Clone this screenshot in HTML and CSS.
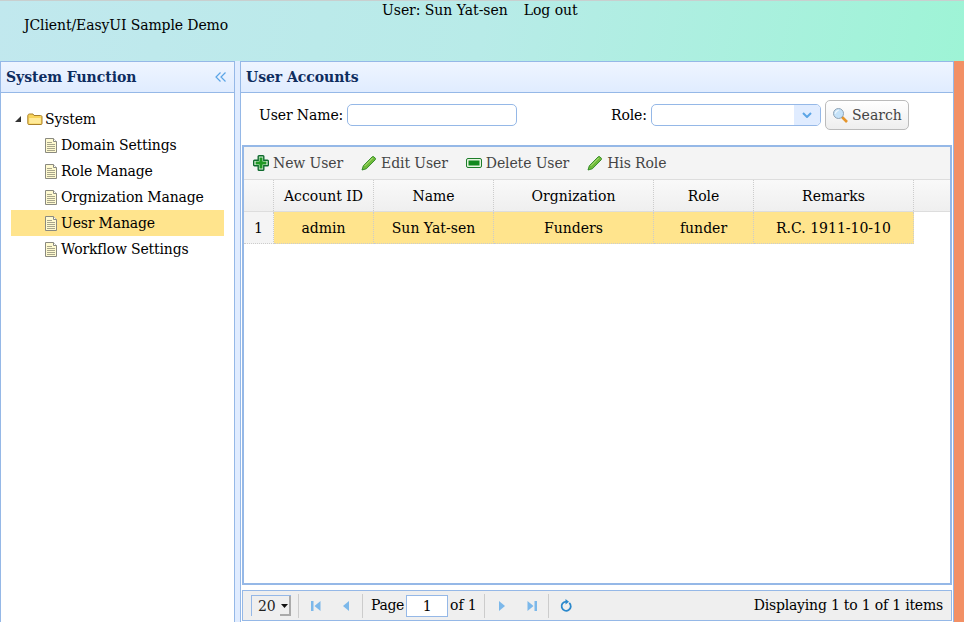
FILE: index.html
```html
<!DOCTYPE html>
<html lang="en">
<head>
<meta charset="utf-8">
<title>JClient/EasyUI Sample Demo</title>
<link rel="stylesheet" href="styles.css">
</head>
<body>
<svg class="defs" width="0" height="0">
  <defs>
    <symbol id="doc" viewBox="0 0 16 16">
      <path d="M1.500 1.500h8l3 3v11h-11z" fill="#fffad0" stroke="#8a8a80"/>
      <path d="M9.500 1.500v3h3" fill="#fff" stroke="#8a8a80"/>
      <path d="M3 5.500h5M3 7.500h8M3 9.500h8M3 11.500h8M3 13.500h8" stroke="#a8a68c" fill="none"/>
    </symbol>
    <symbol id="pencil" viewBox="0 0 16 16">
      <path d="M1 15l1.300-4.200 8.900-9c.5-.5 1.200-.5 1.700 0l1.300 1.300c.5 .5 .5 1.200 0 1.700l-8.900 9z" fill="#6fbb3a" stroke="#2a8420" stroke-width=".9"/>
      <path d="M3.800 10.800l7.800-7.800" stroke="#c4e88f" fill="none" stroke-width=".9"/>
    </symbol>
  </defs>
</svg>
<header class="top">
  <div class="brand">JClient/EasyUI Sample Demo</div>
  <div class="user"><span>User: Sun Yat-sen</span><span>Log out</span></div>
</header>
<div class="main">
  <aside class="side">
    <div class="phead">
      <span>System Function</span>
      <svg class="collapse" width="12" height="12" viewBox="0 0 12 12"><path d="M5.500 1.500L1 6l4.500 4.500M10.500 1.500L6 6l4.500 4.500" fill="none" stroke="#5ba5e6" stroke-width="1.200"/></svg>
    </div>
    <div class="tree">
      <div class="node root">
        <svg class="arrow" width="8" height="8" viewBox="0 0 8 8"><path d="M7 1v6H1z" fill="#333"/></svg>
        <svg class="ico" width="16" height="16" viewBox="0 0 16 16"><path d="M.8 5c0-1.200.7-2 1.700-2h3.500l1 1.500h6.500c.8 0 1.500 .5 1.500 1.200v6.800c0 .6-.4 1-1 1H1.800c-.6 0-1-.4-1-1z" fill="#f7d35a" stroke="#a9802c"/><path d="M2.200 7h11.600v5.500H2.200z" fill="#ffea9a"/></svg>
        <span>System</span>
      </div>
      <div class="node leaf"><svg class="ico" width="16" height="16"><use href="#doc"/></svg><span>Domain Settings</span></div>
      <div class="node leaf"><svg class="ico" width="16" height="16"><use href="#doc"/></svg><span>Role Manage</span></div>
      <div class="node leaf"><svg class="ico" width="16" height="16"><use href="#doc"/></svg><span>Orgnization Manage</span></div>
      <div class="node leaf on"><svg class="ico" width="16" height="16"><use href="#doc"/></svg><span>Uesr Manage</span></div>
      <div class="node leaf"><svg class="ico" width="16" height="16"><use href="#doc"/></svg><span>Workflow Settings</span></div>
    </div>
  </aside>
  <section class="content">
    <div class="phead"><span>User Accounts</span></div>
    <div class="cbody">
      <form class="filter">
        <label class="f1">User Name:</label>
        <div class="inp name"></div>
        <label class="f2">Role:</label>
        <div class="inp role"><div class="drop"><svg width="10" height="6" viewBox="0 0 10 6"><path d="M1 1l4 4 4-4" fill="none" stroke="#5ba5e6" stroke-width="2"/></svg></div></div>
        <div class="search">
          <svg width="16" height="16" viewBox="0 0 16 16"><path d="M9.500 9.500l5.500 5.500" stroke="#e5952c" stroke-width="2.600"/><circle cx="6.500" cy="6.500" r="5" fill="#c5e2f8" stroke="#8fa3b5"/><path d="M3.500 6.500a3 3 0 0 1 3-3" stroke="#fff" fill="none"/></svg>
          <span>Search</span>
        </div>
      </form>
      <div class="grid">
        <div class="tools">
          <div class="tool"><svg class="tico" width="16" height="16" viewBox="0 0 16 16"><path d="M6 .7h4c.5 0 .8 .3 .8 .8v3.700h3.700c.5 0 .8 .3 .8 .8v4c0 .5-.3 .8-.8 .8h-3.700v3.700c0 .5-.3 .8-.8 .8H6c-.5 0-.8-.3-.8-.8v-3.700H1.500c-.5 0-.8-.3-.8-.8V6c0-.5 .3-.8 .8-.8h3.700V1.500c0-.5 .3-.8 .8-.8z" fill="#dff2df" stroke="#0f6b2e" stroke-width="1.400"/><path d="M6.500 2.600h3v3.900h3.900v3H9.500v3.900h-3V9.500H2.600v-3h3.900z" fill="#1f9a24"/></svg><span>New User</span></div>
          <div class="tool"><svg class="tico" width="16" height="16"><use href="#pencil"/></svg><span>Edit User</span></div>
          <div class="tool"><svg class="tico" width="16" height="16" viewBox="0 0 16 16"><rect x=".5" y="3.500" width="15" height="9" rx="1.500" fill="#e6f5e0" stroke="#1d7d2a"/><rect x="2.500" y="5.500" width="11" height="5" fill="#128a1f"/></svg><span>Delete User</span></div>
          <div class="tool"><svg class="tico" width="16" height="16"><use href="#pencil"/></svg><span>His Role</span></div>
        </div>
        <div class="row head">
          <div class="c num"></div>
          <div class="c w100">Account ID</div>
          <div class="c w120">Name</div>
          <div class="c w160">Orgnization</div>
          <div class="c w100">Role</div>
          <div class="c w160">Remarks</div>
        </div>
        <div class="row data">
          <div class="c num">1</div>
          <div class="c w100">admin</div>
          <div class="c w120">Sun Yat-sen</div>
          <div class="c w160">Funders</div>
          <div class="c w100">funder</div>
          <div class="c w160">R.C. 1911-10-10</div>
        </div>
      </div>
      <div class="pager">
        <div class="size"><span>20</span><div class="spin"><svg width="7" height="4" viewBox="0 0 7 4"><path d="M0 0h7L3.500 4z" fill="#111"/></svg></div></div>
        <i class="sep"></i>
        <svg class="pb" width="16" height="16" viewBox="0 0 16 16"><path d="M3 3h2.500v10H3zM12.500 3v10L6.500 8z" fill="#7cb8ea"/></svg>
        <svg class="pb" width="16" height="16" viewBox="0 0 16 16"><path d="M11 3v10L5 8z" fill="#7cb8ea"/></svg>
        <i class="sep"></i>
        <span class="pt pg">Page</span>
        <div class="pnum">1</div>
        <span class="pt of">of 1</span>
        <i class="sep"></i>
        <svg class="pb" width="16" height="16" viewBox="0 0 16 16"><path d="M5 3v10l6-5z" fill="#7cb8ea"/></svg>
        <svg class="pb" width="16" height="16" viewBox="0 0 16 16"><path d="M3.500 3v10l6-5zM10.500 3H13v10h-2.500z" fill="#7cb8ea"/></svg>
        <i class="sep"></i>
        <svg class="pb" width="16" height="16" viewBox="0 0 16 16"><path d="M11.300 4.800A4.600 4.600 0 1 1 8 3.600" fill="none" stroke="#2a88cc" stroke-width="1.800"/><path d="M7.500 1v5.500L11 3.800z" fill="#2a88cc"/></svg>
        <span class="info">Displaying 1 to 1 of 1 items</span>
      </div>
    </div>
  </section>
  <div class="strip"></div>
</div>
</body>
</html>
```
FILE: styles.css
```css
* { box-sizing: border-box; }
html, body { height: 100%; }
body {
  margin: 0;
  width: 964px;
  height: 622px;
  overflow: hidden;
  display: flex;
  flex-direction: column;
  font: 14px/1.2 "DejaVu Serif", serif;
  letter-spacing: -0.11px;
  color: #000;
  background: #e0ecff;
}
.defs { display: block; position: absolute; }
.top {
  height: 61px;
  flex: none;
  display: flex;
  border-top: 1px solid #c9cfcf;
  background: linear-gradient(100deg, #c1e8ee 0%, #b8ebe8 50%, #9ef4d6 100%);
}
.brand { margin: 16px 0 0 24px; width: 358px; }
.user { display: flex; gap: 16px; margin-top: 1px; letter-spacing: -0.05px; }
.main { flex: 1; display: flex; min-height: 0; }
.side {
  width: 235px;
  flex: none;
  display: flex;
  flex-direction: column;
  border: 1px solid #95b8e7;
  border-bottom: 0;
  background: #fff;
}
.phead {
  height: 31px;
  flex: none;
  display: flex;
  align-items: center;
  justify-content: space-between;
  padding: 0 7px 0 5px;
  border-bottom: 1px solid #95b8e7;
  background: linear-gradient(#eff5ff, #e0ecff);
  font-weight: bold;
  letter-spacing: -0.05px;
  color: #0e2d5f;
}
.tree { padding: 13px 10px 0; letter-spacing: -0.17px; }
.node { height: 26px; display: flex; align-items: center; }
.root { padding-left: 3px; }
.arrow { margin-right: 5px; }
.ico { flex: none; }
.root span { margin-left: 2px; }
.leaf { padding-left: 33px; }
.leaf span { margin-left: 1px; }
.on { background: #ffe48d; }
.content {
  margin-left: 5px;
  width: 714px;
  flex: none;
  display: flex;
  flex-direction: column;
  border: 1px solid #95b8e7;
  border-bottom: 0;
  background: #fff;
}
.content .phead { padding-left: 5px; }
.cbody { flex: 1; display: flex; flex-direction: column; padding: 0 1px 0 1px; }
.filter { height: 52px; flex: none; display: flex; align-items: center; padding: 0 0 8px 17px; }
.f1 { width: 88px; }
.f2 { margin-left: 94px; width: 40px; }
.inp { height: 22px; border: 1px solid #95b8e7; border-radius: 5px; background: #fff; }
.name { width: 170px; }
.role { width: 170px; display: flex; justify-content: flex-end; overflow: hidden; }
.drop { width: 26px; background: #e0ecff; display: flex; align-items: center; justify-content: center; }
.search {
  margin-left: 4px;
  width: 84px;
  height: 30px;
  display: flex;
  align-items: center;
  gap: 4px;
  padding-left: 6px;
  border: 1px solid #bbb;
  border-radius: 5px;
  background: linear-gradient(#fff, #eee);
  color: #444;
  letter-spacing: 0;
}
.grid { flex: 1; min-height: 0; border: 2px solid #95b8e7; margin: 0 0 5px 0; background: #fff; }
.tools {
  height: 33px;
  display: flex;
  align-items: center;
  padding-left: 9px;
  gap: 18px;
  background: #f4f4f4;
  border-bottom: 1px solid #ddd;
  color: #444;
}
.tool { display: flex; align-items: center; gap: 4px; }
.row { display: flex; height: 32px; letter-spacing: 0; }
.head { background: linear-gradient(#f9f9f9, #efefef); border-bottom: 1px solid #ddd; }
.c {
  flex: none;
  display: flex;
  align-items: center;
  justify-content: center;
  padding-top: 2px;
  border-right: 1px dotted #ccc;
}
.num { width: 30px; }
.w100 { width: 100px; }
.w120 { width: 120px; }
.w160 { width: 160px; }
.data .c { background: #ffe48d; border-bottom: 1px dotted #ccc; }
.data .num { background: #f4f4f4; }
.pager {
  flex: none;
  height: 31px;
  margin-bottom: 1px;
  display: flex;
  align-items: center;
  padding-left: 8px;
  border: 1px solid #95b8e7;
  background: #efefef;
}
.size {
  width: 40px;
  height: 21px;
  margin-right: 6px;
  padding: 2px 0 0 6px;
  display: flex;
  justify-content: space-between;
  border: 1px solid #95b8e7;
  border-right: 0;
  border-bottom: 0;
  color: #222;
}
.spin {
  width: 11px;
  height: 20px;
  margin-top: -2px;
  padding-right: 2px;
  display: flex;
  align-items: center;
  justify-content: center;
  box-shadow: inset -2px -2px 0 #aaa;
}
.sep { width: 1px; height: 24px; background: #ccc; margin: 0 2px 0 1px; flex: none; }
.pb { margin: 0 7px; flex: none; }
.pt { white-space: nowrap; }
.pg { margin-left: 6px; letter-spacing: -0.33px; }
.of { margin-right: 6px; }
.pnum {
  width: 42px;
  height: 22px;
  margin: 0 2px;
  border: 1px solid #95b8e7;
  background: #fff;
  text-align: center;
  line-height: 20px;
}
.info { margin-left: auto; padding-right: 8px; white-space: nowrap; letter-spacing: -0.2px; }
.strip { flex: 1; background: #f29065; }
```
